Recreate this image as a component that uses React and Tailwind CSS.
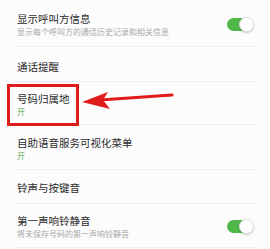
import React from "react";

const font = { fontFamily: '"Noto Sans CJK SC", "Noto Sans", sans-serif' };

function Toggle() {
  return (
    <div className="relative w-[26px] h-[13px] rounded-full bg-[#4fb648]">
      <div className="absolute right-[-1px] top-[-1px] w-[15px] h-[15px] rounded-full bg-white border border-[#e2e2e2] shadow-[0_1px_2px_rgba(0,0,0,0.2)]" />
    </div>
  );
}

function Row({ title, sub, subGreen, toggle, h, pt }) {
  return (
    <div className={`flex items-start justify-between pl-[17px] pr-[17px] ${h} ${pt}`}>
      <div className="flex flex-col">
        <div className="text-[10.5px] leading-[13px] text-[#2b2b2b]">{title}</div>
        {sub && (
          <div
            className={`mt-[2px] text-[8px] leading-[10px] ${
              subGreen ? "text-[#5aa84f]" : "text-[#a8a8a8]"
            }`}
          >
            {sub}
          </div>
        )}
      </div>
      {toggle && <div className="mt-[6px]"><Toggle /></div>}
    </div>
  );
}

function Divider() {
  return <div className="mx-[14px] h-px bg-[#efefef]" />;
}

export default function App() {
  return (
    <div className="relative w-[270px] h-[249px] bg-[#fcfcfc] overflow-hidden" style={font}>
      <Row title="显示呼叫方信息" sub="显示每个呼叫方的通话历史记录和相关信息" toggle h="h-[46px]" pt="pt-[12px]" />
      <Divider />
      <Row title="通话提醒" h="h-[34px]" pt="pt-[13px]" />
      <Divider />
      <Row title="号码归属地" sub="开" subGreen h="h-[42px]" pt="pt-[10px]" />
      <Divider />
      <Row title="自助语音服务可视化菜单" sub="开" subGreen h="h-[44px]" pt="pt-[11px]" />
      <Divider />
      <Row title="铃声与按键音" h="h-[33px]" pt="pt-[11px]" />
      <Divider />
      <Row title="第一声响铃静音" sub="将未保存号码的第一声响铃静音" toggle h="h-[43px]" pt="pt-[10px]" />
      <Divider />

      {/* highlight box */}
      <div className="absolute left-[7px] top-[84px] w-[72px] h-[42px] border-[3px] border-[#e01b1b]" />

      {/* arrow */}
      <svg className="absolute left-0 top-0" width="270" height="249" viewBox="0 0 270 249">
        <line x1="172" y1="95" x2="100" y2="100" stroke="#e01b1b" strokeWidth="3" strokeLinecap="round" />
        <polygon points="82,102 108,92 103,100 110,109" fill="#e01b1b" />
      </svg>
    </div>
  );
}
